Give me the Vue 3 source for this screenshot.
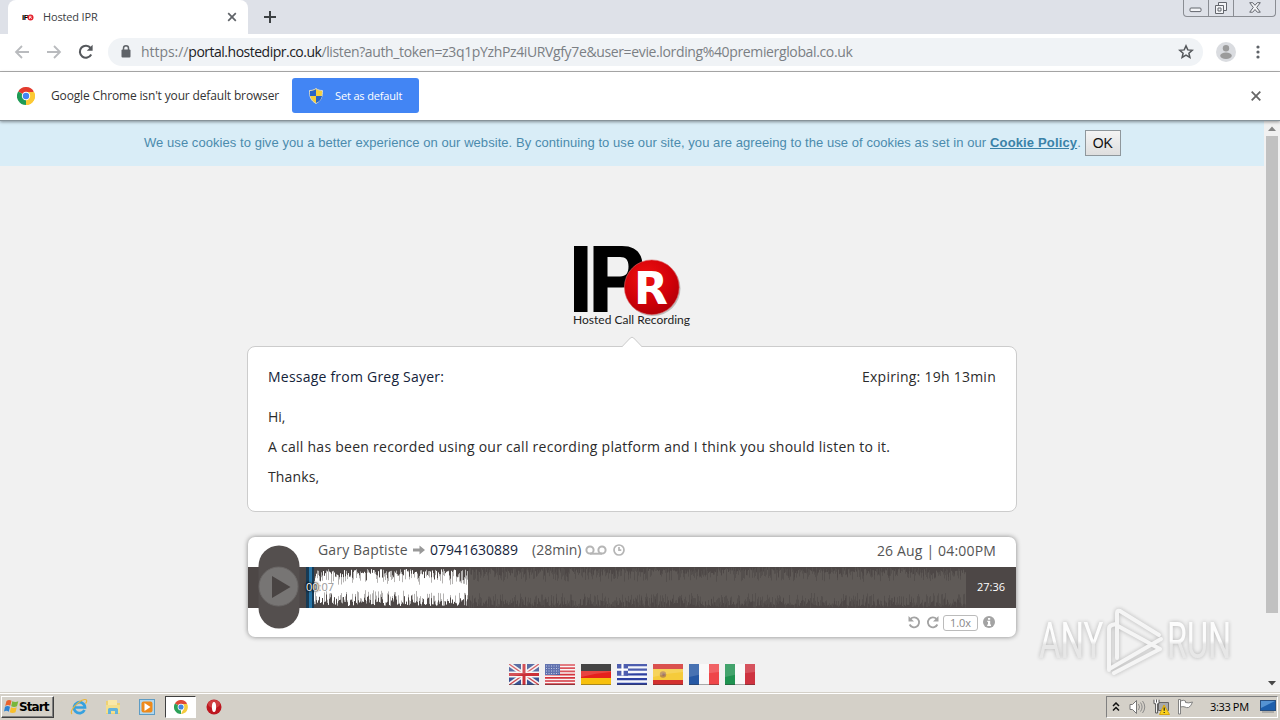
<script setup>
const flags = ['uk', 'us', 'de', 'gr', 'es', 'fr', 'it']

// small seeded generator so the waveform is the same on every load
function makeWave(from, to, seed, low, high, power) {
  let s = seed
  const rand = () => {
    s = (s * 16807) % 2147483647
    return s / 2147483647
  }
  let d = ''
  for (let x = from; x < to; x++) {
    const top = low + (high - low) * Math.pow(rand(), power)
    const bottom = low + (high - low) * Math.pow(rand(), power)
    d += `M${x + 0.5} ${(20 - top).toFixed(1)}V${(21 + bottom).toFixed(1)}`
  }
  return d
}

const played = makeWave(66, 220, 4217, 2, 18, 0.9)
const playedSoft = makeWave(66, 220, 911, 6, 18, 0.9)
const rest = makeWave(220, 718, 733, 5, 18, 0.8)
const restSoft = makeWave(220, 718, 5381, 9, 20, 0.7)
</script>

<template>
  <div class="screen">
    <header class="tabstrip">
      <div class="tab">
        <svg class="favicon" width="12" height="8" viewBox="0 0 12 8">
          <text x="0" y="7" class="fav-text" textLength="7">IP</text>
          <circle cx="8.5" cy="4.5" r="3" fill="#e4202b" />
          <path d="M7.5 6V3.3h1.6v1.2H7.6M8.6 4.6L9.8 6" stroke="#fff" stroke-width=".7" fill="none" />
        </svg>
        <span class="tab-title">Hosted IPR</span>
        <svg class="tab-close" width="10" height="10" viewBox="0 0 10 10"><path d="M1.2 1.2l7.6 7.6M8.8 1.2L1.2 8.8" /></svg>
      </div>
      <svg class="new-tab" width="12" height="12" viewBox="0 0 12 12"><path d="M6 0v12M0 6h12" /></svg>
      <div class="win-buttons">
        <span class="wb min"><svg width="14" height="6" viewBox="0 0 14 6"><rect x="1" y="1" width="11" height="3.6" rx="1" /></svg></span>
        <span class="wb max"><svg width="14" height="13" viewBox="0 0 14 13"><path d="M4.5 3.5v-3h8v8h-3" /><path d="M1.5 3.500h8v8h-8z" /><path d="M4 6h3v3H4z" /></svg></span>
        <span class="wb close"><svg width="12" height="11" viewBox="0 0 12 11"><path d="M.7.7h3L6 3.300 8.300.7h3L7.700 5.400l3.600 4.800h-3L6 7.500l-2.300 2.700h-3l3.600-4.800z" /></svg></span>
      </div>
    </header>

    <div class="toolbar">
      <svg class="nav back" width="16" height="14" viewBox="0 0 16 14"><path d="M15 7H2M8 1L2 7l6 6" /></svg>
      <svg class="nav forward" width="16" height="14" viewBox="0 0 16 14"><path d="M1 7h13M8 1l6 6-6 6" /></svg>
      <svg class="nav reload" width="16" height="16" viewBox="0 0 16 16"><path d="M13.200 10.500A6 6 0 1 1 12.600 4" /><path class="tip" d="M14.600.8v6H8.800z" /></svg>
      <div class="omnibox">
        <svg class="lock" width="10" height="13" viewBox="0 0 10 13"><rect x=".5" y="4.500" width="9" height="8" rx="1" /><path d="M2.500 5V3.300a2.500 2.500 0 0 1 5 0V5" /></svg>
        <span class="url"><i>https://</i><b>portal.hostedipr.co.uk</b>/listen?auth_token=z3q1pYzhPz4iURVgfy7e&amp;user=evie.lording%40premierglobal.co.uk</span>
        <svg class="star" width="16" height="16" viewBox="0 0 16 16"><path d="M8 1.900l1.800 4 4.400.4-3.300 2.900 1 4.300L8 11.200l-3.900 2.300 1-4.300-3.300-2.900 4.400-.4z" /></svg>
      </div>
      <svg class="avatar" width="20" height="20" viewBox="0 0 20 20"><circle cx="10" cy="10" r="10" fill="#dadce0" /><circle cx="10" cy="6.200" r="3.200" fill="#9b9b9b" /><ellipse cx="10" cy="13.800" rx="5.800" ry="3.200" fill="#9b9b9b" /></svg>
      <svg class="kebab" width="4" height="14" viewBox="0 0 4 14"><circle cx="2" cy="2" r="1.600" /><circle cx="2" cy="7" r="1.600" /><circle cx="2" cy="12" r="1.600" /></svg>
    </div>

    <div class="infobar">
      <svg width="18" height="18" viewBox="0 0 18 18">
        <path d="M9 9L1.200 4.500A9 9 0 0 1 16.800 4.500z" fill="#e33b2e" />
        <path d="M9 9l7.800-4.500A9 9 0 0 1 9 18z" fill="#fcc934" />
        <path d="M9 9v9A9 9 0 0 1 1.200 4.500z" fill="#1e9b55" />
        <path d="M9 5h7.900a9 9 0 0 1-7.900 13l3.500-7z" fill="#fcc934" />
        <circle cx="9" cy="9" r="4.200" fill="#fff" /><circle cx="9" cy="9" r="3.200" fill="#4285f4" />
      </svg>
      <span class="info-text">Google Chrome isn't your default browser</span>
      <button class="default-btn">
        <svg width="14" height="16" viewBox="0 0 14 16">
          <path d="M7 .5c2 1.500 4 2 6.500 2 0 6-1 10-6.500 13C1.500 12.500.5 8.500.5 2.500c2.500 0 4.500-.5 6.500-2z" fill="#f4cf3d" stroke="#d8d9ce" />
          <path d="M7 1.200V8H1C.9 6 .9 4.500 1 3c2.300 0 4.200-.6 6-1.800zM7 8h6c-.6 3.500-2.500 5.500-6 7z" fill="#2864c8" />
        </svg>
        <span>Set as default</span>
      </button>
      <svg class="info-close" width="10" height="10" viewBox="0 0 10 10"><path d="M.7.7l8.600 8.600M9.300.7L.7 9.300" /></svg>
    </div>

    <div class="viewport">
      <main class="page">
        <div class="cookies">
          <span class="cookie-text">We use cookies to give you a better experience on our website. By continuing to use our site, you are agreeing to the use of cookies as set in our</span>
          <a class="policy">Cookie Policy</a><span class="dot">.</span>
          <button class="ok">OK</button>
        </div>

        <svg class="logo" width="120" height="84" viewBox="0 0 120 84">
          <defs>
            <radialGradient id="ball" cx=".4" cy=".3" r=".8"><stop offset="0" stop-color="#ee1111" /><stop offset=".6" stop-color="#cf0008" /><stop offset="1" stop-color="#a80008" /></radialGradient>
          </defs>
          <rect x="2" y="2" width="13.500" height="66" />
          <path fill-rule="evenodd" d="M21.500 2H50c13 0 20.500 6.500 20.500 20S63 43.500 50 43.500H35.500V68h-14zM35.500 13v19.500H48c6 0 8.500-3.500 8.500-10S54 13 48 13z" />
          <circle cx="81" cy="44.500" r="27.500" fill="#8b8b8b" opacity=".5" />
          <circle cx="79.800" cy="43.300" r="27.400" fill="url(#ball)" stroke="#d66" stroke-width=".6" />
          <text x="62" y="59.500" class="logo-r" textLength="34" lengthAdjust="spacingAndGlyphs">R</text>
          <text x="1" y="79.500" class="logo-sub" textLength="117">Hosted Call Recording</text>
        </svg>

        <section class="message">
          <svg class="pointer" width="20" height="12" viewBox="0 0 20 12"><path d="M0 11L10 .7 20 11v1H0z" fill="#fff" /><path d="M0 10.700L8.300 2q1.700-1.600 3.400 0L20 10.700" fill="none" stroke="#ccc" /></svg>
          <div class="message-head">
            <span class="from">Message from Greg Sayer:</span>
            <span class="expires">Expiring: 19h 13min</span>
          </div>
          <p class="hi">Hi,</p>
          <p class="body-text">A call has been recorded using our call recording platform and I think you should listen to it.</p>
          <p class="thanks">Thanks,</p>
        </section>

        <section class="player">
          <div class="player-head">
            <span class="caller">Gary Baptiste</span>
            <svg class="arrow" width="12" height="10" viewBox="0 0 12 10"><path d="M0 3.500h6.500V.5L12 5 6.500 9.500v-3H0z" fill="#999" /></svg>
            <span class="phone">07941630889</span>
            <span class="length">(28min)</span>
            <svg class="tape" width="22" height="10" viewBox="0 0 22 10"><circle cx="5" cy="5" r="3.600" /><circle cx="17" cy="5" r="3.600" /><path d="M5 8.700h12" /></svg>
            <svg class="clock" width="12" height="12" viewBox="0 0 12 12"><circle cx="6" cy="6" r="5" /><path d="M6 3v3.200h2.300" /></svg>
            <span class="date">26 Aug | 04:00PM</span>
          </div>
          <div class="track">
            <svg width="768" height="41" viewBox="0 0 768 41">
              <rect x="58" y="0" width="8" height="41" fill="#173a54" />
              <path d="M62.500 0v41" stroke="#2876a8" stroke-width="3" />
              <path :d="restSoft" stroke="#544f4d" />
              <path :d="rest" stroke="#5f5a57" />
              <path :d="playedSoft" stroke="#b5b3b2" />
              <path :d="played" stroke="#fff" />
            </svg>
            <span class="elapsed"><i>00</i>:07</span>
            <span class="total">27:36</span>
          </div>
          <div class="player-foot">
            <svg class="turn" width="13" height="13" viewBox="0 0 13 13"><path d="M2.500 2.800A5 5 0 1 1 1.600 8.500" /><path class="tip" d="M.5 0v5.500H6z" /></svg>
            <svg class="turn second" width="13" height="13" viewBox="0 0 13 13"><path d="M10.500 2.800A5 5 0 1 0 11.400 8.500" /><path class="tip" d="M12.500 0v5.500H7z" /></svg>
            <span class="speed">1.0x</span>
            <svg class="info" width="12" height="12" viewBox="0 0 12 12"><circle cx="6" cy="6" r="6" fill="#a3a3a3" /><path d="M5 2h2.200v1.700H5zM4.300 4.700h2.900v3.900h.8V10H4.200V8.600H5V6h-.7z" fill="#fff" /></svg>
          </div>
          <div class="play">
            <svg width="42" height="84" viewBox="0 0 42 84"><rect x=".5" y=".5" width="41" height="83" rx="20.500" fill="#544f4e" /><circle cx="20.500" cy="41.500" r="19.500" fill="#777574" stroke="#6a6766" /><path d="M14 31v22L32.500 42z" fill="#494443" /></svg>
          </div>
        </section>

        <nav class="flags">
          <svg v-for="f in flags" :key="f" width="30" height="21" viewBox="0 0 30 21">
            <g v-if="f === 'uk'">
              <rect width="30" height="21" fill="#3c5494" />
              <path d="M0 0l30 21M30 0L0 21" stroke="#f3f3f5" stroke-width="4.500" /><path d="M0 0l30 21M30 0L0 21" stroke="#d0484e" stroke-width="1.300" />
              <path d="M15 0v21M0 10.500h30" stroke="#f6f6f6" stroke-width="6" /><path d="M15 0v21M0 10.500h30" stroke="#cb3038" stroke-width="3" />
            </g>
            <g v-else-if="f === 'us'">
              <rect width="30" height="21" fill="#f8f4f4" />
              <path d="M0 1h30M0 4.200h30M0 7.400h30M0 10.600h30M0 13.800h30M0 17h30M0 20.200h30" stroke="#d3353e" stroke-width="1.700" />
              <rect width="15" height="11" fill="#4358a0" /><path d="M1 2h13M1 4.500h13M1 7h13M1 9.500h13" stroke="#b6c0df" stroke-dasharray="1 1.500" />
            </g>
            <g v-else-if="f === 'de'"><rect width="30" height="7" fill="#222" /><rect y="7" width="30" height="7" fill="#e5211c" /><rect y="14" width="30" height="7" fill="#f7c00d" /></g>
            <g v-else-if="f === 'gr'">
              <rect width="30" height="21" fill="#f4f6fb" /><path d="M0 1h30M0 5.700h30M0 10.400h30M0 15.100h30M0 19.800h30" stroke="#2d40a0" stroke-width="2.300" />
              <rect width="11" height="11.500" fill="#2d40a0" /><path d="M5.500 0v11.500M0 5.700h11" stroke="#fff" stroke-width="2.200" />
            </g>
            <g v-else-if="f === 'es'"><rect width="30" height="21" fill="#d3302e" /><rect y="5" width="30" height="11" fill="#f5cb3b" /><circle cx="10" cy="10.500" r="3.200" fill="#b98b4e" /><circle cx="10.500" cy="10.500" r="1.300" fill="#946b62" /></g>
            <g v-else><rect width="30" height="21" fill="#f8f8f8" /><rect width="10" height="21" :fill="f === 'fr' ? '#2658a4' : '#1f9250'" /><rect x="20" width="10" height="21" :fill="f === 'fr' ? '#ef4649' : '#ce3340'" /></g>
            <path d="M0 0h30v8Q15 9 0 13z" fill="#fff" opacity=".16" />
            <path d="M0 20.500h30" stroke="#333" stroke-opacity=".4" />
          </svg>
        </nav>
      </main>

      <div class="scrollbar">
        <svg width="16" height="15" viewBox="0 0 16 15"><path d="M4 10l4-4.500 4 4.500z" fill="#858585" /></svg>
        <div class="thumb"></div>
        <svg width="16" height="17" viewBox="0 0 16 17"><path d="M4 6h8l-4 4.500z" fill="#484848" /></svg>
      </div>
    </div>

    <footer class="taskbar">
      <button class="start">
        <svg width="15" height="15" viewBox="0 0 15 15"><path d="M2.500 2Q5 0 7.500 1.800L6.300 6.800Q4 5.200 1.200 6.900z" fill="#e9622d" /><path d="M8.300 2.300q3 1.600 6 0L13 7.200q-3 1.500-5.800 0z" fill="#78b63c" /><path d="M1 7.700q2.600-1.500 5 0L4.800 12.700Q2.400 11 0 12.600z" fill="#2d82d2" /><path d="M7 8.200q2.800 1.400 5.700 0l-1.200 5q-3 1.400-5.700 0z" fill="#f8bf2c" /></svg>
        <span>Start</span>
      </button>
      <svg class="app" width="18" height="18" viewBox="0 0 18 18">
        <path d="M14.500 12A5.500 5.500 0 1 1 15 9.500H4.500" fill="none" stroke="#36a1df" stroke-width="2.700" /><path d="M2 16C-1 13 8 3 14.500 1.500c3-.3 2.500 2.500 1 4" fill="none" stroke="#e9b53a" stroke-width="1.200" />
      </svg>
      <svg class="app" width="18" height="18" viewBox="0 0 18 18"><path d="M2 3h5l1 2h8v11H2z" fill="#eed173" /><path d="M4 2h9v5H4z" fill="#f9e8a7" /><path d="M2 7h14v8H2z" fill="#f3df8d" /><path d="M4 16v-4.500q0-1.500 1.500-1.500h7q1.500 0 1.500 1.500V16h-3v-3H7v3z" fill="#62b3db" /></svg>
      <svg class="app" width="18" height="18" viewBox="0 0 18 18"><rect x="1.500" y="1.500" width="15" height="15" fill="#b1d7ee" stroke="#5e9cc4" /><rect x="3.500" y="3.500" width="11" height="11" rx="2" fill="#ee8a1b" /><path d="M6.500 5v8l6-4z" fill="#fff" /></svg>
      <div class="app-active">
        <svg width="14" height="14" viewBox="0 0 18 18">
          <path d="M9 9L1.200 4.500A9 9 0 0 1 16.800 4.500z" fill="#df4936" /><path d="M9 9v9A9 9 0 0 1 1.200 4.500z" fill="#2ca158" /><path d="M9 5h7.900A9 9 0 0 1 9 18l3.500-7z" fill="#f5cb3d" />
          <circle cx="9" cy="9" r="4.300" fill="#fff" /><circle cx="9" cy="9" r="3.300" fill="#4285e0" />
        </svg>
      </div>
      <svg class="opera" width="16" height="16" viewBox="0 0 16 16"><circle cx="8" cy="8" r="7.500" fill="#bd1720" /><ellipse cx="8" cy="5" rx="6" ry="4" fill="#e2655f" opacity=".5" /><ellipse cx="8" cy="8" rx="2.100" ry="5" fill="#fff" /></svg>
      <div class="tray">
        <svg width="8" height="10" viewBox="0 0 8 10"><path d="M1 4l3-3 3 3M1 8.500l3-3 3 3" fill="none" stroke="#111" stroke-width="1.500" /></svg>
        <svg class="speaker" width="17" height="16" viewBox="0 0 17 16"><path d="M1 5.500h2.500l4-4v13l-4-4H1z" fill="#fff" stroke="#777" /><path d="M9.500 5q2 3 0 6M11.500 3.500q3.200 4.500 0 9M13.500 2q4.500 6 0 12" fill="none" stroke="#828282" stroke-width=".9" /></svg>
        <svg class="network" width="17" height="16" viewBox="0 0 17 16"><path d="M5.500 3.500h10v8h-10z" fill="#a7a9ab" stroke="#666" /><path d="M7 14.500h7" stroke="#666" /><path d="M1 .7v4h1.600V14h2V4.700H6v-4M3.500.5v3" fill="#fff" stroke="#555" /><path d="M11 6l5.500 9.500h-10z" fill="#fbd21c" stroke="#d7a50f" /><path d="M11.200 8.500v3.300M11.200 13v1" stroke="#222" stroke-width="1.200" /></svg>
        <svg class="flag" width="17" height="16" viewBox="0 0 17 16"><path d="M1.500.5h2V15h-2zM3.500 2q3-1.500 5 0v1.500q3 1 7-.5-1.500 4.500-4 5.500-2 .5-3.500-.5-2-.8-4.500 0z" fill="#fff" stroke="#777" stroke-width=".9" /></svg>
        <span class="time">3:33 PM</span>
        <svg class="desktop" width="16" height="13" viewBox="0 0 16 13"><rect x=".5" y=".5" width="15" height="10" fill="#1d5fac" stroke="#294f7f" /><path d="M1 1h14L1 8z" fill="#5593d2" /><path d="M2 12h12" stroke="#888" /></svg>
      </div>
    </footer>

    <svg class="watermark" width="220" height="80" viewBox="0 0 220 80">
      <defs>
        <linearGradient id="mark" x1="0" y1="0" x2="0" y2="1"><stop offset=".5" stop-color="#fff" /><stop offset=".56" stop-color="#e6e6e6" /></linearGradient>
      </defs>
      <text transform="translate(3 53) scale(.66 1)" class="mark-text">ANY</text>
      <text transform="translate(131 53) scale(.65 1)" class="mark-text">RUN</text>
      <g class="mark-shape">
        <path d="M73 65V24q0-3 3-4l4-1" /><path d="M81 53V8q0-3 3-2l39 24" /><path d="M82 21l42 23-46 24" /><path d="M75 63l50-29" />
      </g>
    </svg>
  </div>
</template>

<style>
body {
  margin: 0;
  overflow: hidden;
}
</style>

<style scoped>
.screen {
  position: relative;
  display: flex;
  flex-direction: column;
  width: 1280px;
  height: 720px;
  overflow: hidden;
  background: #f1f1f1;
  font-family: "Open Sans", "Noto Sans", sans-serif;
  white-space: nowrap;
}

svg { display: block; flex: none; }
button { font-family: inherit; }

.tabstrip {
  display: flex;
  height: 34px;
  background: #dee1e8;
}

.tab {
  display: flex;
  align-items: center;
  box-sizing: border-box;
  width: 240px;
  margin-left: 8px;
  padding: 0 11px 1px 14px;
  border-radius: 8px 8px 0 0;
  background: #fff;
}

.fav-text { font: bold 8px "Liberation Sans", sans-serif; }
.tab-title { margin-left: 9px; font-size: 11px; letter-spacing: -0.15px; color: #3c4043; }
.tab-close { margin-left: auto; stroke: #5f6368; stroke-width: 1.7; }
.new-tab { margin: 11px 0 0 16px; stroke: #3c4043; stroke-width: 2; }

.win-buttons {
  display: flex;
  height: 16px;
  margin: 0 4px 0 auto;
  border: 1px solid #8a8d93;
  border-top: 0;
  border-radius: 0 0 4px 4px;
}

.wb { display: flex; justify-content: center; width: 24px; }
.wb + .wb { border-left: 1px solid #8a8d93; }
.wb.close { width: 41px; }
.wb svg { fill: #f3f4f7; stroke: #63666d; margin-top: 2px; }
.wb.min svg { margin-top: 7px; }

.toolbar {
  display: flex;
  align-items: center;
  box-sizing: border-box;
  height: 38px;
  padding-bottom: 2px;
  border-bottom: 1px solid #b0b0b0;
  background: #fff;
}

.nav { fill: none; stroke: #b9bbbe; stroke-width: 1.8; }
.back { margin-left: 14px; }
.forward { margin-left: 16px; }
.reload { margin-left: 16px; stroke: #55585c; stroke-width: 2.1; }
.reload .tip { fill: #55585c; stroke: none; }

.omnibox {
  display: flex;
  align-items: center;
  box-sizing: border-box;
  width: 1095px;
  height: 28px;
  margin-left: 14px;
  padding: 0 9px 0 13px;
  border-radius: 14px;
  background: #f0f3f6;
}

.lock { fill: #5f6368; }
.lock path { fill: none; stroke: #5f6368; stroke-width: 1.5; }
.url { margin-left: 10px; font-size: 14px; letter-spacing: -0.365px; color: #7b7f84; }
.url i { font-style: normal; letter-spacing: -0.05px; }
.url b { font-weight: 400; letter-spacing: -0.5px; color: #202124; }
.star { margin-left: auto; fill: none; stroke: #55585c; stroke-width: 1.5; }
.avatar { margin-left: 13px; }
.kebab { margin-left: 20px; fill: #5f6368; }

.infobar {
  position: relative;
  z-index: 1;
  display: flex;
  align-items: center;
  box-sizing: border-box;
  height: 49px;
  padding: 0 19px 1px 17px;
  border-bottom: 1px solid #87939a;
  background: #fff;
  box-shadow: 0 1px 3px rgba(0, 0, 0, 0.4);
}

.info-text { width: 228px; margin-left: 16px; font-size: 12px; letter-spacing: -0.15px; color: #333; }

.default-btn {
  display: flex;
  align-items: center;
  width: 127px;
  height: 35px;
  margin-left: 13px;
  padding: 0 0 0 17px;
  border: 0;
  border-radius: 3px;
  background: #4285f4;
  color: #fff;
  font-size: 11px;
}

.default-btn span { margin-left: 12px; letter-spacing: -0.15px; }
.info-close { margin-left: auto; stroke: #666; stroke-width: 1.8; }

.viewport { display: flex; height: 571px; }

.page {
  display: flex;
  flex-direction: column;
  align-items: center;
  width: 1264px;
}

.cookies {
  display: flex;
  align-items: center;
  box-sizing: border-box;
  width: 100%;
  height: 45px;
  padding: 0 0 2px 144px;
  background: #d9edf7;
  color: #4b8bad;
  font: 13px "Liberation Sans", Arial, sans-serif;
}

.cookie-text { width: 843px; letter-spacing: 0.058px; }
.policy { margin-left: 3px; font-weight: 700; letter-spacing: 0.15px; text-decoration: underline; color: #3a82a8; }

.ok {
  width: 36px;
  height: 26px;
  margin-left: 4px;
  padding: 0;
  border: 1px solid #8f979c;
  background: linear-gradient(#f4f4f4, #dedede);
  color: #111;
  font: 14px "Liberation Sans", Arial, sans-serif;
}

.logo { margin-top: 78px; }
.logo-r { font: bold 45px "DejaVu Sans", sans-serif; fill: #fff; }
.logo-sub { font: 12px Lato, sans-serif; fill: #222; }

.message {
  position: relative;
  box-sizing: border-box;
  width: 770px;
  height: 166px;
  margin-top: 18px;
  padding: 20px 20px 0;
  border: 1px solid #ccc;
  border-radius: 8px;
  background: #fff;
  color: #2b2b2b;
  font-size: 14px;
}

.pointer { position: absolute; left: 373.5px; top: -11px; }
.message-head { display: flex; justify-content: space-between; line-height: 20px; }
.from { letter-spacing: 0.22px; color: #14233a; }
.expires { letter-spacing: 0.25px; }
.message p { margin: 0; line-height: 30px; }
.message .hi { margin-top: 15px; }
.message .body-text { letter-spacing: 0.262px; }
.message .thanks { letter-spacing: 0.15px; }

.player {
  position: relative;
  width: 768px;
  height: 100px;
  margin-top: 25px;
  border-radius: 7px;
  background: #fff;
  box-shadow: 0 0 5px rgba(0, 0, 0, 0.45);
  color: #555;
  font-size: 14px;
}

.player-head {
  display: flex;
  align-items: center;
  box-sizing: border-box;
  height: 30px;
  padding: 0 20px 5px 70px;
}

.caller { width: 90px; letter-spacing: 0.15px; }
.arrow { margin-left: 5px; }
.phone { margin-left: 5px; color: #14233a; }
.length { margin-left: 14px; }
.tape { margin-left: 4px; fill: none; stroke: #b5b5b5; stroke-width: 2; }
.clock { margin-left: 6px; fill: none; stroke: #b5b5b5; stroke-width: 1.7; }
.date { margin-left: auto; padding-top: 2px; letter-spacing: 0.17px; }

.track { position: relative; height: 41px; background: #4d4746; font-size: 11px; }
.elapsed { position: absolute; left: 58px; top: 12px; color: #999; text-shadow: 0 0 2px #fff, 0 0 1px #fff; }
.elapsed i { font-style: normal; color: #fff; text-shadow: 0 0 1px #000, 0 0 2px #000, 0 0 3px #000; }
.total { position: absolute; right: 11px; top: 12px; color: #fff; }

.player-foot {
  display: flex;
  align-items: center;
  box-sizing: border-box;
  height: 29px;
  padding: 0 21px 1px 0;
}

.turn { margin-left: auto; fill: none; stroke: #a3a3a3; stroke-width: 1.8; }
.turn.second { margin-left: 5px; }
.turn .tip { fill: #a3a3a3; stroke: none; }

.speed {
  box-sizing: border-box;
  width: 35px;
  height: 16px;
  margin: 1px 5px 0 4px;
  border: 1px solid #bbb;
  border-radius: 3px;
  color: #888;
  font-size: 11px;
  line-height: 14px;
  text-align: center;
}

.play { position: absolute; left: 10px; top: 8px; }

.flags { display: flex; gap: 6px; margin-top: 27px; }

.scrollbar { display: flex; flex-direction: column; align-items: center; width: 16px; background: #f1f1f1; }
.thumb { width: 12px; height: 477px; margin-bottom: 62px; background: #c1c1c1; }

.taskbar {
  display: flex;
  align-items: center;
  box-sizing: border-box;
  height: 28px;
  padding: 1px 2px 1px 1px;
  border-top: 1px solid #d4d0c8;
  box-shadow: inset 0 1px #fff;
  background: #d4d0c8;
}

.start {
  display: flex;
  align-items: center;
  box-sizing: border-box;
  width: 53px;
  height: 22px;
  padding: 0 0 0 2px;
  border: 1px solid;
  border-color: #fff #404040 #404040 #fff;
  background: #d4d0c8;
  box-shadow: inset -1px -1px #808080;
  color: #000;
}

.start span { font: bold 12px "DejaVu Sans", sans-serif; letter-spacing: -0.9px; }
.app { margin-left: 16px; }

.app-active {
  display: flex;
  align-items: center;
  justify-content: center;
  box-sizing: border-box;
  width: 31px;
  height: 22px;
  margin-left: 9px;
  border: 1px solid;
  border-color: #404040 #fff #fff #404040;
  background: #fff;
}

.opera { margin-left: 10px; }

.tray {
  display: flex;
  align-items: center;
  box-sizing: border-box;
  width: 172px;
  height: 22px;
  margin-left: auto;
  padding: 0 1px 0 5px;
  border: 1px solid;
  border-color: #808080 #fff #fff #808080;
}

.speaker { margin-left: 9px; }
.network { margin-left: 7px; }
.flag { margin-left: 7px; }
.time { margin-left: 16px; color: #000; font-size: 11px; letter-spacing: -0.35px; }
.desktop { margin-left: auto; }

.watermark { position: absolute; left: 1036px; top: 605px; filter: drop-shadow(0 0 2px rgba(0, 0, 0, 0.3)); opacity: 0.85; }
.mark-text { font: 50px Roboto, sans-serif; fill: url(#mark); }
.mark-shape { fill: none; stroke: #f6f6f6; stroke-width: 4; stroke-linecap: round; stroke-linejoin: round; }
</style>
